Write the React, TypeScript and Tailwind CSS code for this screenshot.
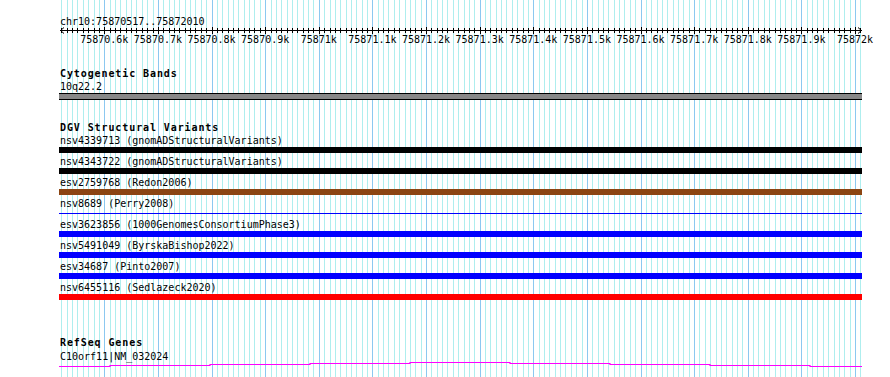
const START = 75870517
const END = 75872010
const X0 = 59.8
const SCALE = 0.53621

const toX = (bp: number) => X0 + (bp - START) * SCALE

const gridBps: number[] = []
for (let bp = Math.ceil(START / 10) * 10; bp <= END; bp += 10) gridBps.push(bp)

const majorBps = gridBps.filter((bp) => bp % 100 === 0)

const tickLabel = (bp: number) => {
  const k = bp / 1000
  return `${k % 1 === 0 ? k.toFixed(0) : k.toFixed(1)}k`
}

const variants = [
  { label: 'nsv4339713 (gnomADStructuralVariants)', bar: 'bg-black' },
  { label: 'nsv4343722 (gnomADStructuralVariants)', bar: 'bg-black' },
  { label: 'esv2759768 (Redon2006)', bar: 'bg-[#8b4513]' },
  { label: 'nsv8689 (Perry2008)', bar: 'thin' },
  { label: 'esv3623856 (1000GenomesConsortiumPhase3)', bar: 'bg-[#0000ff]' },
  { label: 'nsv5491049 (ByrskaBishop2022)', bar: 'bg-[#0000ff]' },
  { label: 'esv34687 (Pinto2007)', bar: 'bg-[#0000ff]' },
  { label: 'nsv6455116 (Sedlazeck2020)', bar: 'bg-[#ff0000]' },
]

// intron line of the gene, stepping up to the middle and back down
const geneSteps = [
  [59, 366],
  [110, 365],
  [210, 364],
  [310, 363],
  [410, 362],
  [510, 363],
  [610, 364],
  [710, 365],
  [810, 366],
]

function Grid() {
  return (
    <svg className="absolute inset-0" width={890} height={377} aria-hidden="true">
      {gridBps.map((bp) => {
        const x = Math.round(toX(bp)) + 0.5
        return (
          <line
            key={bp}
            x1={x}
            x2={x}
            y1={0}
            y2={377}
            stroke={bp % 100 === 0 ? '#8cc8f0' : '#aeeeee'}
            strokeWidth={1}
          />
        )
      })}
    </svg>
  )
}

function Ruler() {
  const left = 60
  const right = 862
  return (
    <svg width={890} height={20} className="-ml-[59px] -mt-[2px] block">
      <line x1={left} x2={right} y1={4.5} y2={4.5} stroke="#000" />
      <path d={`M${left + 4} 1.5 L${left + 0.5} 4.5 L${left + 4} 7.5`} stroke="#000" fill="none" />
      <path d={`M${right - 4} 1.5 L${right - 0.5} 4.5 L${right - 4} 7.5`} stroke="#000" fill="none" />
      {gridBps.map((bp) => {
        const x = Math.round(toX(bp)) + 0.5
        const major = bp % 100 === 0
        return (
          <line key={bp} x1={x} x2={x} y1={major ? 1 : 2} y2={major ? 8 : 7} stroke="#000" />
        )
      })}
      {majorBps.map((bp) => (
        <text
          key={bp}
          x={toX(bp)}
          y={17}
          textAnchor="middle"
          fontSize={10}
          fontFamily="'DejaVu Sans Mono', 'Liberation Mono', monospace"
          fill="#000"
        >
          {tickLabel(bp)}
        </text>
      ))}
    </svg>
  )
}

function GeneLine() {
  let d = ''
  geneSteps.forEach(([x, y], i) => {
    const lx = x - 59
    const ly = y - 361 + 0.5
    d += i === 0 ? `M${lx} ${ly}` : ` H${lx} V${ly}`
  })
  d += ' H803'
  return (
    <svg width={803} height={7} className="block -mt-[2px]">
      <path d={d} stroke="#ff00ff" strokeWidth={1.2} fill="none" />
    </svg>
  )
}

export default function App() {
  return (
    <div className="relative w-[890px] h-[377px] overflow-hidden bg-white text-black font-['DejaVu_Sans_Mono','Liberation_Mono',monospace] text-[10px] leading-[12px]">
      <Grid />
      <div className="relative pl-[59px] pt-[16px]">
        <div className="ml-[1px] h-[12px]">chr10:75870517..75872010</div>
        <Ruler />

        <div className="mt-[22px] ml-[1px] h-[12px] font-bold tracking-[0.9px]">Cytogenetic Bands</div>
        <div className="mt-[1px] ml-[1px] h-[12px]">10q22.2</div>
        <div className="w-[803px] h-[7px] bg-[#888888] border-y border-black" />

        <div className="mt-[22px] ml-[1px] h-[12px] font-bold tracking-[0.9px]">DGV Structural Variants</div>
        <div className="mt-[1px] flex flex-col">
          {variants.map((v) => (
            <div key={v.label} className="h-[21px] flex flex-col">
              <div className="ml-[1px] h-[12px] whitespace-nowrap">{v.label}</div>
              {v.bar === 'thin' ? (
                <div className="h-[6px] w-[803px] flex flex-col justify-center">
                  <div className="h-px w-[803px] bg-[#0000ff] mt-[1px]" />
                </div>
              ) : (
                <div className={`h-[6px] w-[803px] ${v.bar}`} />
              )}
            </div>
          ))}
        </div>

        <div className="mt-[34px] ml-[1px] h-[12px] font-bold tracking-[0.9px]">RefSeq Genes</div>
        <div className="mt-[2px] ml-[1px] h-[12px]">C10orf11|NM_032024</div>
        <GeneLine />
      </div>
    </div>
  )
}
